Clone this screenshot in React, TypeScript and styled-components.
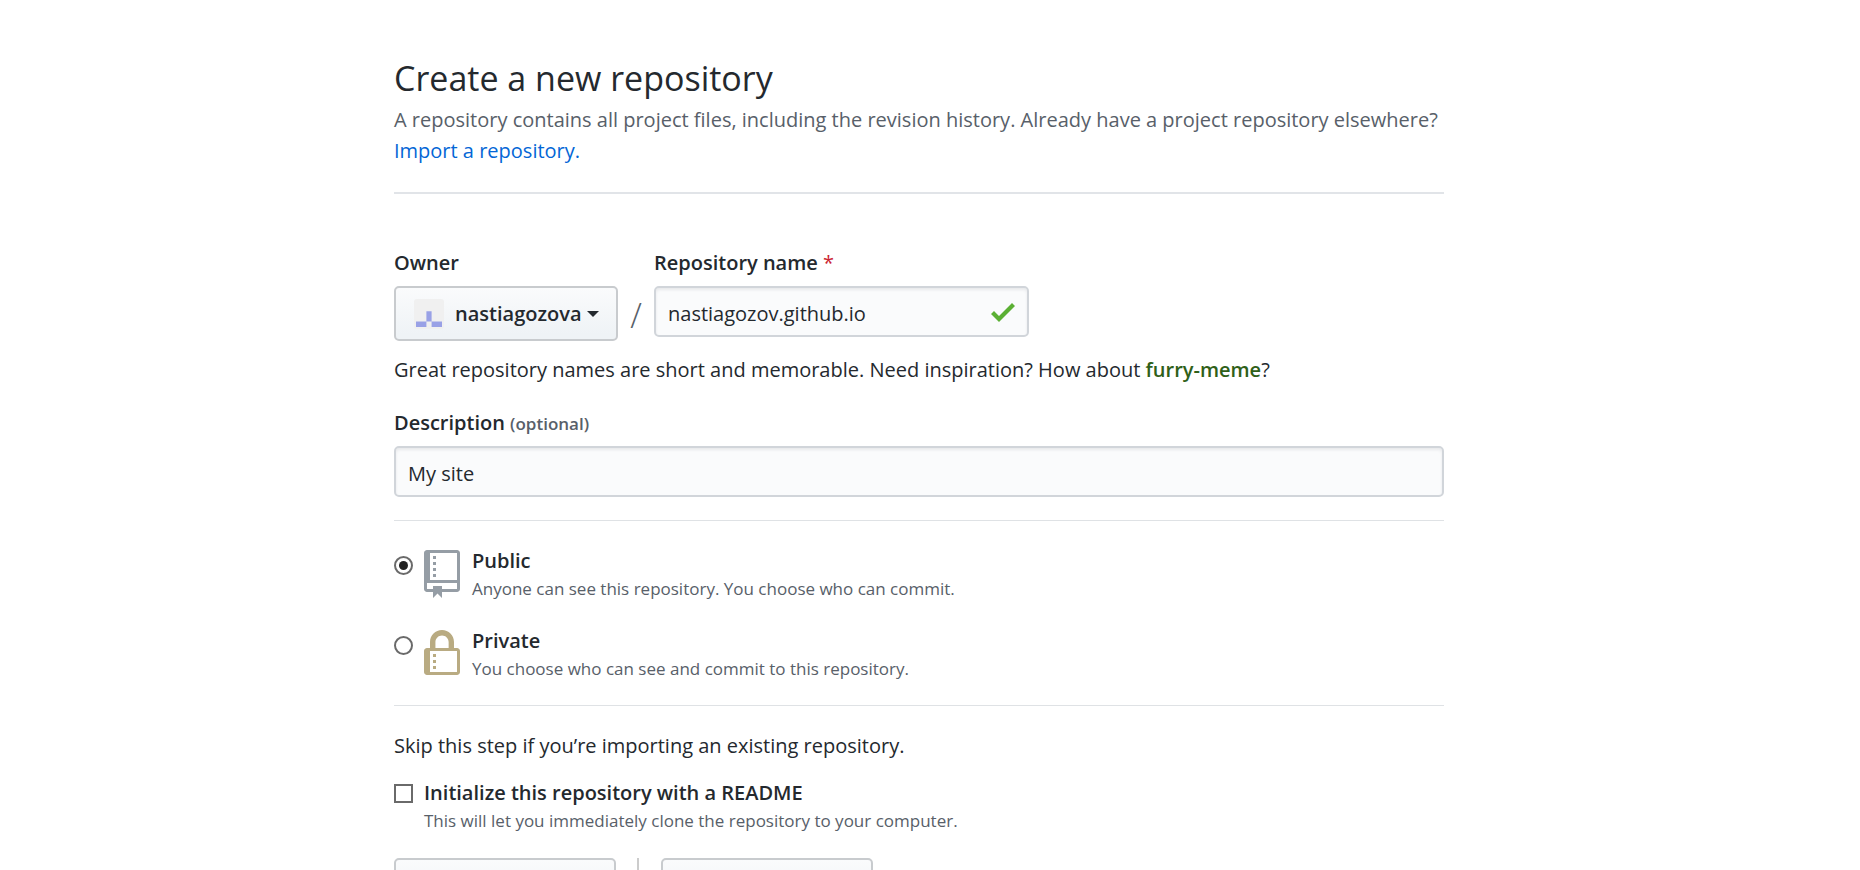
import React from "react";
import styled, { createGlobalStyle } from "styled-components";

const GlobalStyle = createGlobalStyle`
  *, *::before, *::after { box-sizing: border-box; }
  body {
    margin: 0;
    background: #fff;
    color: #24292e;
    font-family: "Segoe UI", "Open Sans", "Noto Sans", sans-serif;
    font-size: 20px;
    line-height: 32px;
  }
  h1, p { margin: 0; }
`;

const Page = styled.main`
  height: 100vh;
  overflow: hidden;
  padding: 54px 22px 0 0;
`;

const Form = styled.form`
  max-width: 1050px;
  margin: 0 auto;
`;

const Header = styled.header`
  padding-bottom: 26px;
  border-bottom: 2px solid #e1e4e8;
  margin-bottom: 53px;
`;

const Title = styled.h1`
  margin-bottom: 2px;
  font-size: 34px;
  font-weight: 400;
  line-height: 48px;
`;

const Lead = styled.p`
  color: #586069;
  line-height: 31px;
`;

const Link = styled.a`
  color: #0366d6;
  text-decoration: none;
`;

const Fields = styled.div`
  display: flex;
  align-items: flex-start;
`;

const Field = styled.div`
  display: flex;
  flex-direction: column;
  align-items: flex-start;
  gap: 7px;
`;

const Label = styled.label`
  font-weight: 600;
`;

const Required = styled.span`
  color: #cb2431;
  font-weight: 400;
`;

const Optional = styled.span`
  color: #586069;
  font-size: 17px;
  line-height: 1;
`;

const Slash = styled.span`
  width: 36px;
  padding-top: 44px;
  color: #586069;
  font-size: 34px;
  font-weight: 300;
  line-height: 48px;
  text-align: center;
`;

const Button = styled.button<{ $width: number }>`
  display: flex;
  align-items: center;
  width: ${(p) => p.$width}px;
  height: 55px;
  padding: 0 18px;
  border: 2px solid #c8cbce;
  border-radius: 5px;
  background: linear-gradient(#fafbfc, #eff3f6 90%);
  color: #24292e;
  font: inherit;
  font-weight: 600;
`;

const Avatar = styled.svg`
  flex: none;
  margin-right: 11px;
`;

const Caret = styled.span`
  margin-left: 6px;
  border: 6px solid transparent;
  border-top-color: currentColor;
  border-bottom: 0;
`;

const InputWrap = styled.div`
  position: relative;
  width: 375px;
`;

const Input = styled.input`
  display: block;
  width: 100%;
  height: 51px;
  padding: 4px 12px 0;
  border: 2px solid #d1d5da;
  border-radius: 5px;
  background: #fafbfc;
  box-shadow: inset 0 2px 3px rgba(27, 31, 35, 0.08);
  color: #24292e;
  font: inherit;
  outline: none;
`;

const CheckMark = styled.svg`
  position: absolute;
  top: 10px;
  right: 14px;
`;

const Note = styled.p`
  margin: 13px 0 21px;
`;

const Suggestion = styled.strong`
  color: #2f6018;
  font-weight: 600;
`;

const Divider = styled.hr`
  height: 1px;
  margin: 23px 0 24px;
  border: 0;
  background: #dfe2e5;
`;

const Choices = styled.div`
  display: flex;
  flex-direction: column;
  gap: 24px;
  margin: 26px 0 22px;
`;

const Choice = styled.label`
  display: flex;
  align-items: flex-start;
  line-height: 28px;
`;

const Tick = styled.input`
  appearance: none;
  flex: none;
  display: grid;
  place-content: center;
  width: 19px;
  height: 19px;
  margin: 9px 11px 0 0;
  border: 2px solid #6a6a6a;
  background: #fff;

  &[type="radio"] { border-radius: 50%; }
  &[type="radio"]:checked::before {
    content: "";
    width: 9px;
    height: 9px;
    border-radius: 50%;
    background: #222;
  }
  &[type="checkbox"] { margin-top: 5px; }
`;

const ChoiceIcon = styled.svg`
  flex: none;
  margin: 3px 12px 0 0;
`;

const ChoiceText = styled.span`
  display: flex;
  flex-direction: column;
`;

const ChoiceTitle = styled.span`
  font-weight: 600;
`;

const ChoiceHint = styled.span`
  color: #586069;
  font-size: 17px;
`;

const Section = styled.section`
  border-top: 1px solid #dfe2e5;
`;

const Skip = styled.p`
  margin: 24px 0 17px;
`;

const Templates = styled.div`
  display: flex;
  margin-top: 23px;
`;

const TemplateDivider = styled.span`
  width: 2px;
  margin: 0 22px 0 21px;
  background: #ccc;
`;

const repoPath =
  "M4 9H3V8h1v1zm0-3H3v1h1V6zm0-2H3v1h1V4zm0-2H3v1h1V2zm8-1v12c0 .55-.45 1-1 1H6v2l-1.5-1.5L3 16v-2H1c-.55 0-1-.45-1-1V1c0-.55.45-1 1-1h10c.55 0 1 .45 1 1zm-1 10H1v2h2v-1h3v1h5v-2zm0-10H2v9h9V1z";
const lockPath =
  "M4 13H3v-1h1v1zm8-6v7c0 .55-.45 1-1 1H1c-.55 0-1-.45-1-1V7c0-.55.45-1 1-1h1V4c0-2.2 1.8-4 4-4s4 1.8 4 4v2h1c.55 0 1 .45 1 1zM3.8 6h4.41V4c0-1.22-.98-2.2-2.2-2.2-1.22 0-2.2.98-2.2 2.2v2H3.8zM11 7H2v7h9V7zM4 8H3v1h1V8zm0 2H3v1h1v-1z";

const visibilities = [
  {
    id: "public",
    title: "Public",
    hint: "Anyone can see this repository. You choose who can commit.",
    path: repoPath,
    color: "#959da5",
  },
  {
    id: "private",
    title: "Private",
    hint: "You choose who can see and commit to this repository.",
    path: lockPath,
    color: "#b9ab82",
  },
];

export default function App() {
  return (
    <Page>
      <GlobalStyle />
      <Form onSubmit={(e) => e.preventDefault()}>
        <Header>
          <Title>Create a new repository</Title>
          <Lead>
            A repository contains all project files, including the revision history. Already have a
            project repository elsewhere?
            <br />
            <Link href="#import">Import a repository.</Link>
          </Lead>
        </Header>

        <Fields>
          <Field>
            <Label htmlFor="owner">Owner</Label>
            <Button id="owner" type="button" $width={224}>
              <Avatar width="30" height="30" viewBox="0 0 30 30" aria-hidden="true">
                <rect width="30" height="30" rx="3" fill="#f0f0f0" />
                <path
                  d="M12.400 12.200h5.200v10.400h-5.200zM2 22.600h10.400v5.400H2zM17.600 22.600H28v5.400H17.600z"
                  fill="#99a1e6"
                />
              </Avatar>
              nastiagozova
              <Caret />
            </Button>
          </Field>
          <Slash>/</Slash>
          <Field>
            <Label htmlFor="repo-name">
              Repository name <Required>*</Required>
            </Label>
            <InputWrap>
              <Input id="repo-name" type="text" defaultValue="nastiagozov.github.io" />
              <CheckMark width="24" height="32" viewBox="0 0 12 16" aria-hidden="true">
                <path d="M12 5l-8 8-4-4 1.500-1.500L4 10l6.500-6.500L12 5z" fill="#5bb034" />
              </CheckMark>
            </InputWrap>
          </Field>
        </Fields>

        <Note>
          Great repository names are short and memorable. Need inspiration? How about{" "}
          <Suggestion>furry-meme</Suggestion>?
        </Note>

        <Field>
          <Label htmlFor="description">
            Description <Optional>(optional)</Optional>
          </Label>
          <Input id="description" type="text" defaultValue="My site" />
        </Field>

        <Divider />

        <Choices>
          {visibilities.map((v) => (
            <Choice key={v.id}>
              <Tick type="radio" name="visibility" defaultChecked={v.id === "public"} />
              <ChoiceIcon width="36" height="48" viewBox="0 0 12 16" aria-hidden="true">
                <path d={v.path} fill={v.color} fillRule="evenodd" />
              </ChoiceIcon>
              <ChoiceText>
                <ChoiceTitle>{v.title}</ChoiceTitle>
                <ChoiceHint>{v.hint}</ChoiceHint>
              </ChoiceText>
            </Choice>
          ))}
        </Choices>

        <Section>
          <Skip>Skip this step if you’re importing an existing repository.</Skip>
          <Choice>
            <Tick type="checkbox" />
            <ChoiceText>
              <ChoiceTitle>Initialize this repository with a README</ChoiceTitle>
              <ChoiceHint>
                This will let you immediately clone the repository to your computer.
              </ChoiceHint>
            </ChoiceText>
          </Choice>

          <Templates>
            <Button type="button" aria-label="Add .gitignore" $width={222} />
            <TemplateDivider />
            <Button type="button" aria-label="Add a license" $width={212} />
          </Templates>
        </Section>
      </Form>
    </Page>
  );
}
